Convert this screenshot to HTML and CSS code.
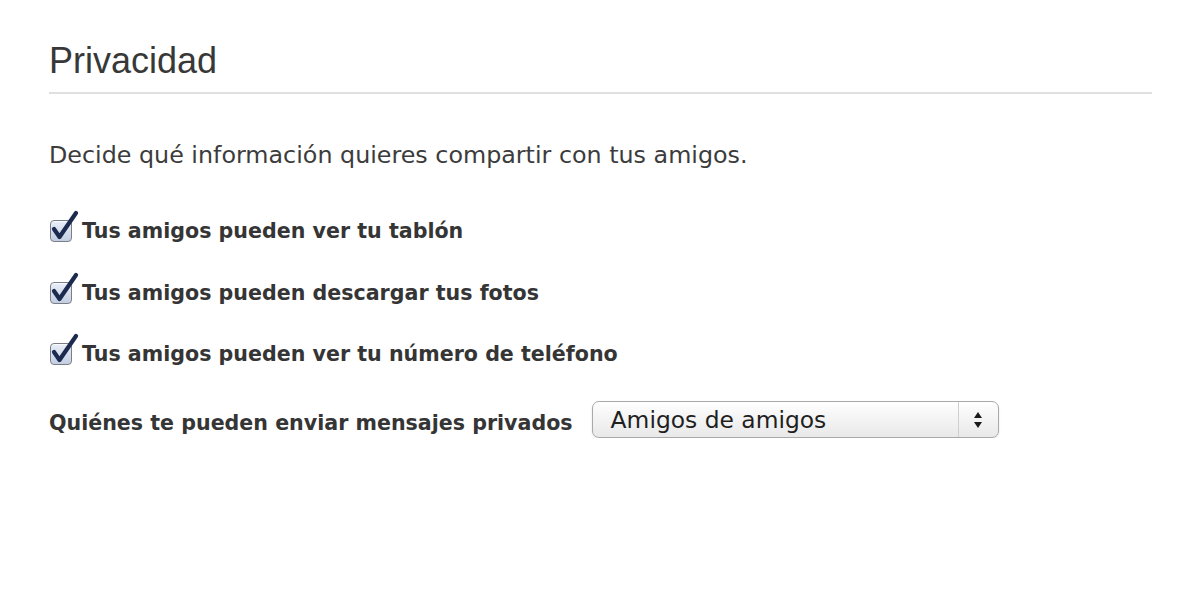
FILE: index.html
```html
<!DOCTYPE html>
<html lang="es">
<head>
<meta charset="utf-8">
<title>Privacidad</title>
<link rel="stylesheet" href="styles.css">
</head>
<body>
<main class="panel">
  <h1 class="title">Privacidad</h1>
  <p class="intro">Decide qué información quieres compartir con tus amigos.</p>
  <ul class="options">
    <li class="option">
      <span class="check"><svg class="tick" viewBox="0 0 32 34" width="32" height="34"><path d="M7 19 L12.5 27 L29 3" fill="none" stroke="#1c2a50" stroke-width="4.2" stroke-linecap="round" stroke-linejoin="round"/></svg></span>
      <span class="label">Tus amigos pueden ver tu tablón</span>
    </li>
    <li class="option">
      <span class="check"><svg class="tick" viewBox="0 0 32 34" width="32" height="34"><path d="M7 19 L12.5 27 L29 3" fill="none" stroke="#1c2a50" stroke-width="4.2" stroke-linecap="round" stroke-linejoin="round"/></svg></span>
      <span class="label">Tus amigos pueden descargar tus fotos</span>
    </li>
    <li class="option">
      <span class="check"><svg class="tick" viewBox="0 0 32 34" width="32" height="34"><path d="M7 19 L12.5 27 L29 3" fill="none" stroke="#1c2a50" stroke-width="4.2" stroke-linecap="round" stroke-linejoin="round"/></svg></span>
      <span class="label">Tus amigos pueden ver tu número de teléfono</span>
    </li>
  </ul>
  <div class="field">
    <span class="label">Quiénes te pueden enviar mensajes privados</span>
    <div class="select">
      <span class="select-value">Amigos de amigos</span>
      <span class="select-arrows">
        <svg viewBox="0 0 10 18" width="10" height="18"><path d="M5 1 L9 7 L1 7 Z" fill="#1a1a1a"/><path d="M1 11 L9 11 L5 17 Z" fill="#1a1a1a"/></svg>
      </span>
    </div>
  </div>
</main>
</body>
</html>
```

FILE: styles.css
```css
html, body {
  margin: 0;
  padding: 0;
  background: #ffffff;
}

.panel {
  padding: 41px 0 0 49px;
  width: 1103px;
}

.title {
  margin: 0;
  font-family: "Liberation Sans", Arial, sans-serif;
  font-weight: normal;
  font-size: 36px;
  line-height: 40px;
  color: #383838;
  padding-bottom: 11px;
  border-bottom: 2px solid #e0e0e0;
}

.intro {
  margin: 47px 0 0 0;
  font-family: "DejaVu Sans", Verdana, sans-serif;
  font-size: 23.8px;
  line-height: 28px;
  color: #3c3c3c;
}

.options {
  list-style: none;
  margin: 49px 0 0 0;
  padding: 0;
  display: flex;
  flex-direction: column;
  gap: 35.5px;
}

.option {
  display: flex;
  align-items: center;
  height: 26px;
}

.label {
  font-family: "DejaVu Sans", Verdana, sans-serif;
  font-weight: bold;
  font-size: 20.6px;
  line-height: 26px;
  color: #353535;
}

.check {
  position: relative;
  width: 22px;
  height: 22px;
  margin: 0 10px 0 1px;
  box-sizing: border-box;
  border: 1.5px solid #7b7e86;
  border-radius: 4px;
  background: linear-gradient(#e9eef8, #c3cee2);
  box-shadow: inset 0 1px 1px rgba(255,255,255,0.8);
  flex: none;
}

.tick {
  position: absolute;
  left: -4px;
  top: -11px;
}

.field {
  margin-top: 34px;
  display: flex;
  align-items: center;
  gap: 19px;
}

.field .label {
  position: relative;
  top: 3px;
}

.select {
  width: 407px;
  height: 37px;
  box-sizing: border-box;
  border: 1px solid #a9a9a9;
  border-radius: 7px;
  background: linear-gradient(#ffffff 0%, #f3f3f3 50%, #e9e9e9 100%);
  box-shadow: 0 1px 2px rgba(0,0,0,0.12);
  display: flex;
  align-items: center;
}

.select-value {
  flex: 1;
  padding-left: 18px;
  font-family: "DejaVu Sans", Verdana, sans-serif;
  font-size: 23.4px;
  color: #1f1f1f;
  line-height: 30px;
}

.select-arrows {
  width: 39px;
  height: 100%;
  border-left: 1px solid #cfcfcf;
  display: flex;
  align-items: center;
  justify-content: center;
}
```
